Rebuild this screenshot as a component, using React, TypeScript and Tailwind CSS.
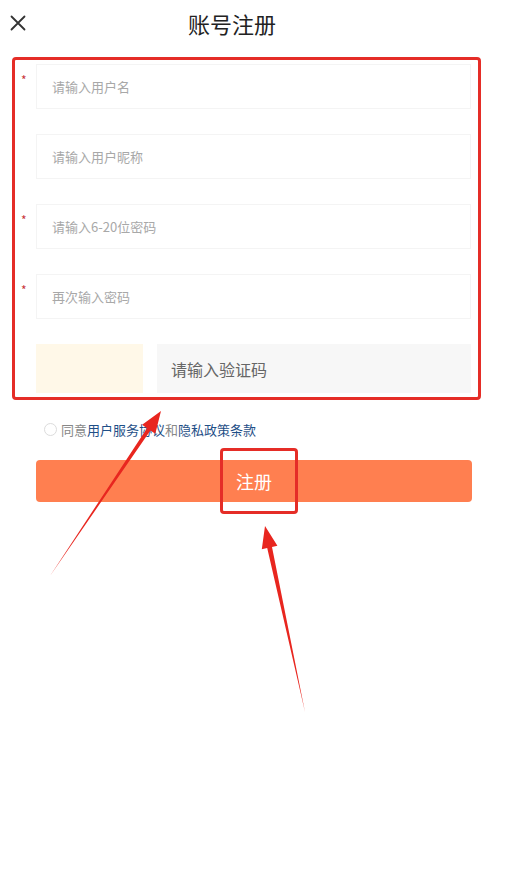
import React from "react";

const font = { fontFamily: '"Noto Sans CJK SC", "Noto Sans", sans-serif' };

function Field({ placeholder, required }: { placeholder: string; required?: boolean }) {
  return (
    <div className="flex items-start">
      <div className="w-[18px] h-[45px] pt-[10px] pl-[3px] text-[12px] leading-none text-[#c8363a]">
        {required ? "*" : ""}
      </div>
      <div className="flex-1 h-[45px] flex items-center border border-[#f4f4f4] bg-white pl-[15px] text-[13px] text-[#a8a8a8]">
        {placeholder}
      </div>
    </div>
  );
}

export default function App() {
  return (
    <div className="relative w-[512px] h-[895px] bg-white overflow-hidden" style={font}>
      <div className="h-[50px] flex items-center pl-[10px]">
        <svg width="16" height="16" viewBox="0 0 16 16" className="mt-[-4px]">
          <path d="M1.5 1.5 L14.5 14.5 M14.5 1.5 L1.5 14.5" stroke="#333" strokeWidth="1.8" strokeLinecap="round" />
        </svg>
        <div className="ml-[162px] text-[22px] leading-none text-[#222] mt-[-4px]">账号注册</div>
      </div>

      <div className="pl-[18px] pr-[41px] pt-[14px] flex flex-col gap-[25px]">
        <Field placeholder="请输入用户名" required />
        <Field placeholder="请输入用户昵称" />
        <Field placeholder="请输入6-20位密码" required />
        <Field placeholder="再次输入密码" required />
        <div className="flex pl-[18px] gap-[14px]">
          <div className="w-[107px] h-[49px] bg-[#fff8e8]" />
          <div className="flex-1 h-[49px] bg-[#f7f7f7] flex items-center pl-[14px] text-[16px] text-[#666]">
            请输入验证码
          </div>
        </div>
      </div>

      <div className="flex items-center pl-[44px] mt-[30px] text-[13px] leading-none">
        <div className="w-[13px] h-[13px] rounded-full border border-[#dcdcdc] mr-[4px]" />
        <span className="text-[#888]">同意</span>
        <span className="text-[#1f4f87]">用户服务协议</span>
        <span className="text-[#888]">和</span>
        <span className="text-[#1f4f87]">隐私政策条款</span>
      </div>

      <div className="mx-[36px] w-[436px] mt-[24px] h-[42px] rounded-[4px] bg-[#ff7f50] flex items-center justify-center text-white text-[18px]">
        注册
      </div>

      {/* annotation overlays */}
      <div className="absolute left-[12px] top-[57px] w-[469px] h-[343px] border-[3px] border-[#e52d27] rounded-[4px] pointer-events-none" />
      <div className="absolute left-[220px] top-[448px] w-[78px] h-[66px] border-[3px] border-[#e52d27] rounded-[4px] pointer-events-none" />
      <svg className="absolute left-0 top-0 pointer-events-none" width="512" height="895" viewBox="0 0 512 895">
        <polygon
          points="50,576 150.4,430.4 155.3,433.8 161,411 142.1,424.8 147.0,428.2"
          fill="#e8261f"
        />
        <polygon
          points="305,712 272.0,547.0 277.4,545.8 265,526 261.8,549.2 267.2,548.0"
          fill="#e8261f"
        />
      </svg>
    </div>
  );
}
